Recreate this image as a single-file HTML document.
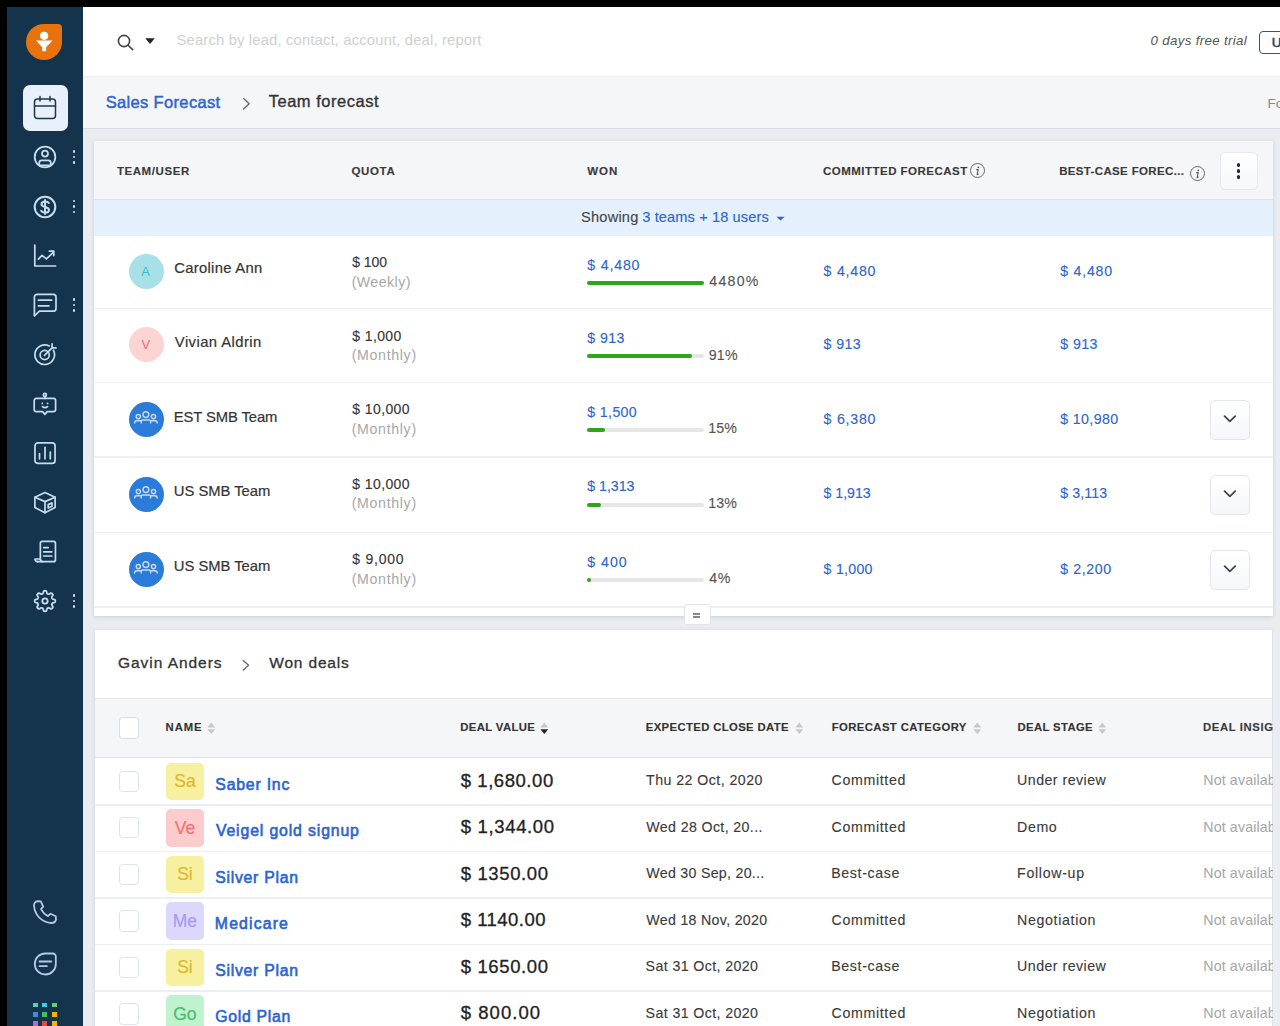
<!DOCTYPE html>
<html><head><meta charset="utf-8">
<style>
*{margin:0;padding:0;box-sizing:border-box}
html,body{width:1280px;height:1026px;overflow:hidden;background:#000;font-family:"Liberation Sans",sans-serif}
.a{position:absolute}
.t{position:absolute;white-space:nowrap;line-height:1;-webkit-text-stroke-width:.12px}
svg{overflow:visible}
</style></head><body>
<div class="a" style="left:82px;top:7px;width:1198px;height:1019px;background:#e9ecf0"></div>
<div class="a" style="left:7px;top:7px;width:75.5px;height:1019px;background:#14344e"></div>
<div class="a" style="left:26px;top:24px;width:36px;height:36px;background:#e8720c;border-radius:50% 4px 50% 50%"></div>
<svg class="a" style="left:26px;top:24px" width="36" height="36" viewBox="0 0 36 36"><circle cx="18.1" cy="11.8" r="4.1" fill="#fff"/><path d="M10 16.6H26.5L20.1 23.3V27.2H16.2V23.3Z" fill="#fff"/></svg>
<div class="a" style="left:22.6px;top:85px;width:45px;height:45.5px;background:#e8f1fb;border-radius:7px"></div>
<svg class="a" style="left:30px;top:92px" width="30" height="30" viewBox="0 0 30 30"><g fill="none" stroke="#1e3550" stroke-width="1.5" stroke-linecap="round" stroke-linejoin="round"><rect x="4.5" y="7" width="21" height="19.5" rx="3"/><path d="M4.5 14H25.5M10 4.5V9M20 4.5V9"/></g></svg>
<svg class="a" style="left:30px;top:142px" width="30" height="30" viewBox="0 0 30 30"><g fill="none" stroke="#c6dcf0" stroke-width="1.8" stroke-linecap="round" stroke-linejoin="round"><circle cx="15" cy="15" r="10.3"/><circle cx="15" cy="11.6" r="3"/><path d="M9.2 23.3V20.8A2.6 2.6 0 0 1 11.8 18.3H18.2A2.6 2.6 0 0 1 20.8 20.8V23.3Z"/></g></svg>
<svg class="a" style="left:30px;top:191.5px" width="30" height="30" viewBox="0 0 30 30"><g fill="none" stroke="#c6dcf0" stroke-width="2" stroke-linecap="round" stroke-linejoin="round"><circle cx="15" cy="15" r="10.3"/><path d="M18.8 11C18.2 10 17 9.5 15.2 9.5C12.9 9.5 11.5 10.5 11.5 12.2C11.5 15.9 19 14 19 17.9C19 19.6 17.4 20.6 15.1 20.6C13.2 20.6 11.8 19.9 11.1 18.8M15 8V22"/></g></svg>
<svg class="a" style="left:30px;top:240px" width="30" height="30" viewBox="0 0 30 30"><g fill="none" stroke="#c6dcf0" stroke-width="1.7" stroke-linecap="round" stroke-linejoin="round"><path d="M4.8 5.2V26H25.6"/><path d="M8.4 19.2L12 15.4L16.4 18.8L23.6 12.2M19.4 11.2H23.8V15.6"/></g></svg>
<svg class="a" style="left:30px;top:289px" width="30" height="30" viewBox="0 0 30 30"><g fill="none" stroke="#c6dcf0" stroke-width="1.7" stroke-linecap="round" stroke-linejoin="round"><path d="M7.1 5.4H23.3A2.7 2.7 0 0 1 26 8.1V19.5A2.7 2.7 0 0 1 23.3 22.2H9.4L4.4 27V8.1A2.7 2.7 0 0 1 7.1 5.4Z"/><path d="M8.4 11.2H21.6M8.4 16.8H19"/></g></svg>
<svg class="a" style="left:30px;top:340px" width="30" height="30" viewBox="0 0 30 30"><g fill="none" stroke="#c6dcf0" stroke-width="1.7" stroke-linecap="round" stroke-linejoin="round"><path d="M23.43 10.25A9.8 9.8 0 1 1 19.21 6"/><circle cx="14.7" cy="15" r="4.6"/><path d="M14.5 15.3L22.1 7.9M22.1 3.8V7.9H26"/></g></svg>
<svg class="a" style="left:30px;top:389px" width="30" height="30" viewBox="0 0 30 30"><g fill="none" stroke="#c6dcf0" stroke-width="1.7" stroke-linecap="round" stroke-linejoin="round"><circle cx="14.9" cy="5.9" r="1.55"/><path d="M14.9 7.5V9.4"/><path d="M6.4 9.4H23.4A2.2 2.2 0 0 1 25.6 11.6V20.4A2.2 2.2 0 0 1 23.4 22.6H17.2L14.9 25.4L12.6 22.6H6.4A2.2 2.2 0 0 1 4.2 20.4V11.6A2.2 2.2 0 0 1 6.4 9.4Z"/><path d="M12.3 14.3V14.4M17.6 14.3V14.4M12.5 17.6Q15 19.7 17.5 17.6"/></g></svg>
<svg class="a" style="left:30px;top:438px" width="30" height="30" viewBox="0 0 30 30"><g fill="none" stroke="#c6dcf0" stroke-width="1.7" stroke-linecap="round" stroke-linejoin="round"><rect x="4.95" y="4.95" width="20.1" height="20.5" rx="3"/><path d="M9.5 15.6V20.8M15 9.4V20.8M20.3 14V20.8"/></g></svg>
<svg class="a" style="left:30px;top:487px" width="30" height="30" viewBox="0 0 30 30"><g fill="none" stroke="#c6dcf0" stroke-width="1.7" stroke-linecap="round" stroke-linejoin="round"><path d="M15 5.5L25.1 10.2V20.6L15 25.7L4.9 20.6V10.2Z"/><path d="M4.9 10.2L15 14.6L25.1 10.2M15 14.6V25.7"/><path d="M18.2 17.6L22 15.9V19.3L18.2 21Z"/></g></svg>
<svg class="a" style="left:30px;top:536px" width="30" height="30" viewBox="0 0 30 30"><g fill="none" stroke="#c6dcf0" stroke-width="1.7" stroke-linecap="round" stroke-linejoin="round"><path d="M10.35 23V7.45A2 2 0 0 1 12.35 5.45H23.45A2 2 0 0 1 25.45 7.45V23.65A2 2 0 0 1 23.45 25.65H7.6"/><path d="M7.6 25.65A2.65 2.65 0 0 1 4.95 23H10.35Q10.35 25.65 12.6 25.65"/><path d="M13.6 11.6H18.2M13.6 15.8H21.8M13.6 20H21.8"/></g></svg>
<svg class="a" style="left:30px;top:586px" width="30" height="30" viewBox="0 0 30 30"><g fill="none" stroke="#c6dcf0" stroke-width="1.8" stroke-linecap="round" stroke-linejoin="round"><path d="M15.00 4.75 L15.40 4.77 L15.80 4.85 L16.18 5.05 L16.50 5.50 L16.74 6.27 L16.91 7.05 L17.11 7.51 L17.36 7.75 L17.62 7.90 L17.89 8.02 L18.17 8.13 L18.46 8.21 L18.80 8.21 L19.27 8.03 L19.94 7.60 L20.65 7.22 L21.20 7.13 L21.61 7.26 L21.95 7.48 L22.25 7.75 L22.52 8.05 L22.74 8.39 L22.87 8.80 L22.78 9.35 L22.40 10.06 L21.97 10.73 L21.79 11.20 L21.79 11.54 L21.87 11.83 L21.98 12.11 L22.10 12.38 L22.25 12.64 L22.49 12.89 L22.95 13.09 L23.73 13.26 L24.50 13.50 L24.95 13.82 L25.15 14.20 L25.23 14.60 L25.25 15.00 L25.23 15.40 L25.15 15.80 L24.95 16.18 L24.50 16.50 L23.73 16.74 L22.95 16.91 L22.49 17.11 L22.25 17.36 L22.10 17.62 L21.98 17.89 L21.87 18.17 L21.79 18.46 L21.79 18.80 L21.97 19.27 L22.40 19.94 L22.78 20.65 L22.87 21.20 L22.74 21.61 L22.52 21.95 L22.25 22.25 L21.95 22.52 L21.61 22.74 L21.20 22.87 L20.65 22.78 L19.94 22.40 L19.27 21.97 L18.80 21.79 L18.46 21.79 L18.17 21.87 L17.89 21.98 L17.62 22.10 L17.36 22.25 L17.11 22.49 L16.91 22.95 L16.74 23.73 L16.50 24.50 L16.18 24.95 L15.80 25.15 L15.40 25.23 L15.00 25.25 L14.60 25.23 L14.20 25.15 L13.82 24.95 L13.50 24.50 L13.26 23.73 L13.09 22.95 L12.89 22.49 L12.64 22.25 L12.38 22.10 L12.11 21.98 L11.83 21.87 L11.54 21.79 L11.20 21.79 L10.73 21.97 L10.06 22.40 L9.35 22.78 L8.80 22.87 L8.39 22.74 L8.05 22.52 L7.75 22.25 L7.48 21.95 L7.26 21.61 L7.13 21.20 L7.22 20.65 L7.60 19.94 L8.03 19.27 L8.21 18.80 L8.21 18.46 L8.13 18.17 L8.02 17.89 L7.90 17.62 L7.75 17.36 L7.51 17.11 L7.05 16.91 L6.27 16.74 L5.50 16.50 L5.05 16.18 L4.85 15.80 L4.77 15.40 L4.75 15.00 L4.77 14.60 L4.85 14.20 L5.05 13.82 L5.50 13.50 L6.27 13.26 L7.05 13.09 L7.51 12.89 L7.75 12.64 L7.90 12.38 L8.02 12.11 L8.13 11.83 L8.21 11.54 L8.21 11.20 L8.03 10.73 L7.60 10.06 L7.22 9.35 L7.13 8.80 L7.26 8.39 L7.48 8.05 L7.75 7.75 L8.05 7.48 L8.39 7.26 L8.80 7.13 L9.35 7.22 L10.06 7.60 L10.73 8.03 L11.20 8.21 L11.54 8.21 L11.83 8.13 L12.11 8.02 L12.38 7.90 L12.64 7.75 L12.89 7.51 L13.09 7.05 L13.26 6.27 L13.50 5.50 L13.82 5.05 L14.20 4.85 L14.60 4.77Z"/><circle cx="15" cy="15" r="2.7"/></g></svg>
<div class="a" style="left:72.7px;top:150.39999999999998px;width:2.6px;height:2.6px;background:#d0e4f4;border-radius:50%"></div>
<div class="a" style="left:72.7px;top:155.89999999999998px;width:2.6px;height:2.6px;background:#d0e4f4;border-radius:50%"></div>
<div class="a" style="left:72.7px;top:161.39999999999998px;width:2.6px;height:2.6px;background:#d0e4f4;border-radius:50%"></div>
<div class="a" style="left:72.7px;top:199.7px;width:2.6px;height:2.6px;background:#d0e4f4;border-radius:50%"></div>
<div class="a" style="left:72.7px;top:205.2px;width:2.6px;height:2.6px;background:#d0e4f4;border-radius:50%"></div>
<div class="a" style="left:72.7px;top:210.7px;width:2.6px;height:2.6px;background:#d0e4f4;border-radius:50%"></div>
<div class="a" style="left:72.7px;top:298.4px;width:2.6px;height:2.6px;background:#d0e4f4;border-radius:50%"></div>
<div class="a" style="left:72.7px;top:303.9px;width:2.6px;height:2.6px;background:#d0e4f4;border-radius:50%"></div>
<div class="a" style="left:72.7px;top:309.4px;width:2.6px;height:2.6px;background:#d0e4f4;border-radius:50%"></div>
<div class="a" style="left:72.7px;top:594.2px;width:2.6px;height:2.6px;background:#d0e4f4;border-radius:50%"></div>
<div class="a" style="left:72.7px;top:599.7px;width:2.6px;height:2.6px;background:#d0e4f4;border-radius:50%"></div>
<div class="a" style="left:72.7px;top:605.2px;width:2.6px;height:2.6px;background:#d0e4f4;border-radius:50%"></div>
<svg class="a" style="left:30px;top:897px" width="30" height="30" viewBox="0 0 30 30"><g fill="none" stroke="#afcbe8" stroke-width="1.8" stroke-linecap="round" stroke-linejoin="round"><path d="M7.8 4.2L10.8 4.4L13.2 9.7L11 12.1Q13.4 16.8 18 19.1L20.3 16.8L25.8 19.3L26 22.5Q25.3 26 21.5 26Q13.8 25.5 8.7 20Q4.5 15.3 4 8.5Q4.1 4.8 7.8 4.2Z"/></g></svg>
<svg class="a" style="left:30px;top:949px" width="30" height="30" viewBox="0 0 30 30"><g fill="none" stroke="#afcbe8" stroke-width="1.8" stroke-linecap="round" stroke-linejoin="round"><path d="M15 4.5H22.8A3 3 0 0 1 25.8 7.5V15.2A10.5 10.5 0 1 1 15 4.5Z"/><path d="M9.5 12.5H21.3M9.5 17.2H16.9"/></g></svg>
<div class="a" style="left:33.1px;top:1002.6px;width:4.9px;height:4.9px;background:#5ad0a4"></div>
<div class="a" style="left:42.38px;top:1002.6px;width:4.9px;height:4.9px;background:#3ccbe8"></div>
<div class="a" style="left:51.66px;top:1002.6px;width:4.9px;height:4.9px;background:#5fcf72"></div>
<div class="a" style="left:33.1px;top:1011.75px;width:4.9px;height:4.9px;background:#3a8fd8"></div>
<div class="a" style="left:42.38px;top:1011.75px;width:4.9px;height:4.9px;background:#3fbf60"></div>
<div class="a" style="left:51.66px;top:1011.75px;width:4.9px;height:4.9px;background:#f6b400"></div>
<div class="a" style="left:33.1px;top:1020.9px;width:4.9px;height:4.9px;background:#b06fd0"></div>
<div class="a" style="left:42.38px;top:1020.9px;width:4.9px;height:4.9px;background:#e84a3a"></div>
<div class="a" style="left:51.66px;top:1020.9px;width:4.9px;height:4.9px;background:#f6b400"></div>
<div class="a" style="left:82.5px;top:7px;width:1197.5px;height:69px;background:#fff"></div>
<svg class="a" style="left:112px;top:30px" width="26" height="24" viewBox="0 0 26 24"><g fill="none" stroke="#444" stroke-width="1.6" stroke-linecap="round"><circle cx="12" cy="11" r="5.6"/><path d="M16.2 15.2L20.6 19.6"/></g></svg>
<svg class="a" style="left:144px;top:37px" width="12" height="8" viewBox="0 0 12 8"><path d="M1.2 1.2H10.8L6 7Z" fill="#222"/></svg>
<div class="t" style="left:176.56px;top:33.27px;font-size:14.8px;color:#cfcfcf;letter-spacing:0.158px;-webkit-text-stroke-width:0">Search by lead, contact, account, deal, report</div>
<div class="t" style="left:1150.47px;top:33.74px;font-size:13.3px;color:#555;font-style:italic;letter-spacing:0.339px;-webkit-text-stroke-width:0">0 days free trial</div>
<div class="a" style="left:1258.5px;top:30.5px;width:40px;height:23.5px;border:1.7px solid #34557a;border-radius:4px;background:#fff"></div>
<div class="t" style="left:1271.8px;top:35.57px;font-size:13.5px;color:#1e3a5c;-webkit-text-stroke-width:.5px">U</div>
<div class="a" style="left:82.5px;top:75.5px;width:1197.5px;height:53.5px;background:#f5f6f8;border-top:1.2px solid #eceff3;border-bottom:1.5px solid #d9dfe6"></div>
<div class="t" style="left:105.78px;top:94.03px;font-size:16.5px;color:#2c64d0;letter-spacing:0.333px;-webkit-text-stroke-width:.45px">Sales Forecast</div>
<svg class="a" style="left:240px;top:96px" width="14" height="16" viewBox="0 0 14 16"><g fill="none" stroke="#666" stroke-width="1.3" stroke-linecap="round" stroke-linejoin="round"><path d="M3.6 2.6L9.2 7.8L3.6 13"/></g></svg>
<div class="t" style="left:268.67px;top:93.03px;font-size:16.5px;color:#333;letter-spacing:0.523px;-webkit-text-stroke-width:.35px">Team forecast</div>
<div class="t" style="left:1267.5px;top:97.37px;font-size:13.5px;color:#8a8a8a;-webkit-text-stroke-width:0">Fo</div>
<div class="a" style="left:94px;top:141px;width:1179px;height:474.5px;background:#fff;box-shadow:0 1px 4px rgba(40,60,90,.16)"></div>
<div class="a" style="left:94px;top:141px;width:1179px;height:59px;background:#f5f6f8;border-bottom:1.5px solid #dde2e8"></div>
<div class="t" style="left:116.88px;top:166.07px;font-size:11.5px;color:#3a3a3a;font-weight:bold;letter-spacing:0.576px;">TEAM/USER</div>
<div class="t" style="left:351.54px;top:166.07px;font-size:11.5px;color:#3a3a3a;font-weight:bold;letter-spacing:0.624px;">QUOTA</div>
<div class="t" style="left:587.2px;top:166.07px;font-size:11.5px;color:#3a3a3a;font-weight:bold;letter-spacing:1.065px;">WON</div>
<div class="t" style="left:822.94px;top:165.57px;font-size:11.5px;color:#3a3a3a;font-weight:bold;letter-spacing:0.484px;">COMMITTED FORECAST</div>
<div class="t" style="left:1059.2px;top:166.27px;font-size:11.5px;color:#3a3a3a;font-weight:bold;letter-spacing:0.347px;">BEST-CASE FOREC...</div>
<div class="a" style="left:970.4px;top:163px;width:15px;height:15px;border:1.1px solid #666;border-radius:50%"></div>
<svg class="a" style="left:970.4px;top:163px" width="15" height="15" viewBox="0 0 15 15"><circle cx="8.3" cy="4.3" r=".85" fill="#555"/><path d="M6.6 6.6H8.3L7.1 11.3Q7 11.8 7.5 11.6L8.4 11.1" fill="none" stroke="#555" stroke-width="1.05" stroke-linecap="round" stroke-linejoin="round"/></svg>
<div class="a" style="left:1190px;top:165.7px;width:15px;height:15px;border:1.1px solid #666;border-radius:50%"></div>
<svg class="a" style="left:1190px;top:165.7px" width="15" height="15" viewBox="0 0 15 15"><circle cx="8.3" cy="4.3" r=".85" fill="#555"/><path d="M6.6 6.6H8.3L7.1 11.3Q7 11.8 7.5 11.6L8.4 11.1" fill="none" stroke="#555" stroke-width="1.05" stroke-linecap="round" stroke-linejoin="round"/></svg>
<div class="a" style="left:1219.5px;top:151.5px;width:38.5px;height:38px;border:1px solid #e6e8eb;border-radius:5px;background:linear-gradient(#fff,#f7f8fa)"></div>
<div class="a" style="left:1236.9px;top:163.0px;width:3.6px;height:3.6px;background:#222;border-radius:50%"></div>
<div class="a" style="left:1236.9px;top:169.0px;width:3.6px;height:3.6px;background:#222;border-radius:50%"></div>
<div class="a" style="left:1236.9px;top:175.0px;width:3.6px;height:3.6px;background:#222;border-radius:50%"></div>
<div class="a" style="left:94px;top:200px;width:1179px;height:35.5px;background:#e4f0fc"></div>
<div class="t" style="left:580.97px;top:210.04px;font-size:14.6px;color:#444;letter-spacing:0.231px;">Showing</div>
<div class="t" style="left:642.22px;top:210.04px;font-size:14.6px;color:#2c64d0;letter-spacing:0.119px;">3 teams + 18 users</div>
<svg class="a" style="left:775px;top:214.5px" width="11" height="7" viewBox="0 0 11 7"><path d="M1.5 1.8H9.5L5.5 5.6Z" fill="#2c64d0"/></svg>
<div class="a" style="left:94px;top:307.8px;width:1179px;height:1.6px;background:#eef0f3"></div>
<div class="a" style="left:128.75px;top:253.75px;width:35px;height:35px;background:#a8e0e8;border-radius:50%"></div>
<div class="t" style="left:141.25px;top:264.75px;font-size:13px;color:#3fb8c8;letter-spacing:0.000px;-webkit-text-stroke-width:0">A</div>
<div class="t" style="left:174.26px;top:261.27px;font-size:14.8px;color:#333;letter-spacing:0.293px;-webkit-text-stroke-width:.2px">Caroline Ann</div>
<div class="t" style="left:352.36px;top:255.45px;font-size:14px;color:#333;letter-spacing:-0.110px;">$ 100</div>
<div class="t" style="left:351.65px;top:274.68px;font-size:14.2px;color:#a8a8a8;letter-spacing:0.434px;-webkit-text-stroke-width:0">(Weekly)</div>
<div class="t" style="left:587.36px;top:257.68px;font-size:14.2px;color:#2c64d0;letter-spacing:0.797px;">$ 4,480</div>
<div class="a" style="left:587px;top:281.20px;width:116.5px;height:4.2px;border-radius:2.1px;background:#e6e6e6"><div style="width:116.5px;height:4.2px;border-radius:2.1px;background:#2aa81a"></div></div>
<div class="t" style="left:709.22px;top:274.48px;font-size:14.2px;color:#555;letter-spacing:1.273px;">4480%</div>
<div class="t" style="left:823.61px;top:264.38px;font-size:14.2px;color:#2c64d0;letter-spacing:0.755px;">$ 4,480</div>
<div class="t" style="left:1060.26px;top:264.38px;font-size:14.2px;color:#2c64d0;letter-spacing:0.755px;">$ 4,480</div>
<div class="a" style="left:94px;top:381.59999999999997px;width:1179px;height:1.6px;background:#eef0f3"></div>
<div class="a" style="left:128.75px;top:327.2px;width:35px;height:35px;background:#fcd4d4;border-radius:50%"></div>
<div class="t" style="left:141.57px;top:338.20px;font-size:13px;color:#ee6e6e;letter-spacing:0.000px;-webkit-text-stroke-width:0">V</div>
<div class="t" style="left:174.85px;top:335.17px;font-size:14.8px;color:#333;letter-spacing:0.436px;-webkit-text-stroke-width:.2px">Vivian Aldrin</div>
<div class="t" style="left:352.36px;top:328.55px;font-size:14px;color:#333;letter-spacing:0.357px;">$ 1,000</div>
<div class="t" style="left:351.65px;top:347.78px;font-size:14.2px;color:#a8a8a8;letter-spacing:0.667px;-webkit-text-stroke-width:0">(Monthly)</div>
<div class="t" style="left:587.36px;top:330.78px;font-size:14.2px;color:#2c64d0;letter-spacing:0.365px;">$ 913</div>
<div class="a" style="left:587px;top:354.30px;width:116.5px;height:4.2px;border-radius:2.1px;background:#e6e6e6"><div style="width:105.4px;height:4.2px;border-radius:2.1px;background:#2aa81a"></div></div>
<div class="t" style="left:708.79px;top:347.58px;font-size:14.2px;color:#555;letter-spacing:0.189px;">91%</div>
<div class="t" style="left:823.61px;top:337.48px;font-size:14.2px;color:#2c64d0;letter-spacing:0.365px;">$ 913</div>
<div class="t" style="left:1060.26px;top:337.48px;font-size:14.2px;color:#2c64d0;letter-spacing:0.428px;">$ 913</div>
<div class="a" style="left:94px;top:456.4px;width:1179px;height:1.6px;background:#eef0f3"></div>
<div class="a" style="left:128.75px;top:402.2px;width:35px;height:35px;background:#2b7bd9;border-radius:50%"></div>
<svg class="a" style="left:128.75px;top:402.2px" width="35" height="35" viewBox="0 0 35 35"><g fill="none" stroke="#c8dcf6" stroke-width="1.4" stroke-linecap="round"><circle cx="16.9" cy="12.6" r="2.9"/><circle cx="9.3" cy="14.6" r="2.1"/><circle cx="24.5" cy="14.6" r="2.1"/><path d="M12.2 21V19.6Q12.2 18 13.8 18H20Q21.6 18 21.6 19.6V21"/><path d="M5.6 21Q5.6 18.8 7.8 18.8H11.6M28.2 21Q28.2 18.8 26 18.8H22.2"/></g></svg>
<div class="t" style="left:173.82px;top:410.07px;font-size:14.8px;color:#333;letter-spacing:-0.106px;-webkit-text-stroke-width:.2px">EST SMB Team</div>
<div class="t" style="left:352.36px;top:402.35px;font-size:14px;color:#333;letter-spacing:0.386px;">$ 10,000</div>
<div class="t" style="left:351.65px;top:421.58px;font-size:14.2px;color:#a8a8a8;letter-spacing:0.667px;-webkit-text-stroke-width:0">(Monthly)</div>
<div class="t" style="left:587.36px;top:404.58px;font-size:14.2px;color:#2c64d0;letter-spacing:0.339px;">$ 1,500</div>
<div class="a" style="left:587px;top:428.10px;width:116.5px;height:4.2px;border-radius:2.1px;background:#e6e6e6"><div style="width:17.5px;height:4.2px;border-radius:2.1px;background:#2aa81a"></div></div>
<div class="t" style="left:708.36px;top:421.38px;font-size:14.2px;color:#555;letter-spacing:0.027px;">15%</div>
<div class="t" style="left:823.61px;top:411.68px;font-size:14.2px;color:#2c64d0;letter-spacing:0.755px;">$ 6,380</div>
<div class="t" style="left:1060.26px;top:411.68px;font-size:14.2px;color:#2c64d0;letter-spacing:0.376px;">$ 10,980</div>
<div class="a" style="left:1210px;top:400.0px;width:39.7px;height:40px;border:1px solid #e4e6e9;border-radius:5px;background:linear-gradient(#fff,#f6f7f9)"></div>
<svg class="a" style="left:1220px;top:410.4px" width="20" height="16" viewBox="0 0 20 16"><g fill="none" stroke="#444" stroke-width="1.8" stroke-linecap="round" stroke-linejoin="round"><path d="M4.6 6.1L9.9 11.3L15.2 6.1"/></g></svg>
<div class="a" style="left:94px;top:531.6px;width:1179px;height:1.6px;background:#eef0f3"></div>
<div class="a" style="left:128.75px;top:477.0px;width:35px;height:35px;background:#2b7bd9;border-radius:50%"></div>
<svg class="a" style="left:128.75px;top:477.0px" width="35" height="35" viewBox="0 0 35 35"><g fill="none" stroke="#c8dcf6" stroke-width="1.4" stroke-linecap="round"><circle cx="16.9" cy="12.6" r="2.9"/><circle cx="9.3" cy="14.6" r="2.1"/><circle cx="24.5" cy="14.6" r="2.1"/><path d="M12.2 21V19.6Q12.2 18 13.8 18H20Q21.6 18 21.6 19.6V21"/><path d="M5.6 21Q5.6 18.8 7.8 18.8H11.6M28.2 21Q28.2 18.8 26 18.8H22.2"/></g></svg>
<div class="t" style="left:173.82px;top:484.27px;font-size:14.8px;color:#333;letter-spacing:-0.032px;-webkit-text-stroke-width:.2px">US SMB Team</div>
<div class="t" style="left:352.36px;top:477.15px;font-size:14px;color:#333;letter-spacing:0.386px;">$ 10,000</div>
<div class="t" style="left:351.65px;top:496.38px;font-size:14.2px;color:#a8a8a8;letter-spacing:0.667px;-webkit-text-stroke-width:0">(Monthly)</div>
<div class="t" style="left:587.36px;top:479.38px;font-size:14.2px;color:#2c64d0;letter-spacing:-0.054px;">$ 1,313</div>
<div class="a" style="left:587px;top:502.90px;width:116.5px;height:4.2px;border-radius:2.1px;background:#e6e6e6"><div style="width:14.0px;height:4.2px;border-radius:2.1px;background:#2aa81a"></div></div>
<div class="t" style="left:708.36px;top:496.18px;font-size:14.2px;color:#555;letter-spacing:0.027px;">13%</div>
<div class="t" style="left:823.61px;top:486.48px;font-size:14.2px;color:#2c64d0;letter-spacing:-0.054px;">$ 1,913</div>
<div class="t" style="left:1060.26px;top:486.48px;font-size:14.2px;color:#2c64d0;letter-spacing:0.086px;">$ 3,113</div>
<div class="a" style="left:1210px;top:474.8px;width:39.7px;height:40px;border:1px solid #e4e6e9;border-radius:5px;background:linear-gradient(#fff,#f6f7f9)"></div>
<svg class="a" style="left:1220px;top:485.2px" width="20" height="16" viewBox="0 0 20 16"><g fill="none" stroke="#444" stroke-width="1.8" stroke-linecap="round" stroke-linejoin="round"><path d="M4.6 6.1L9.9 11.3L15.2 6.1"/></g></svg>
<div class="a" style="left:94px;top:606.1px;width:1179px;height:1.6px;background:#eef0f3"></div>
<div class="a" style="left:128.75px;top:551.8px;width:35px;height:35px;background:#2b7bd9;border-radius:50%"></div>
<svg class="a" style="left:128.75px;top:551.8px" width="35" height="35" viewBox="0 0 35 35"><g fill="none" stroke="#c8dcf6" stroke-width="1.4" stroke-linecap="round"><circle cx="16.9" cy="12.6" r="2.9"/><circle cx="9.3" cy="14.6" r="2.1"/><circle cx="24.5" cy="14.6" r="2.1"/><path d="M12.2 21V19.6Q12.2 18 13.8 18H20Q21.6 18 21.6 19.6V21"/><path d="M5.6 21Q5.6 18.8 7.8 18.8H11.6M28.2 21Q28.2 18.8 26 18.8H22.2"/></g></svg>
<div class="t" style="left:173.82px;top:558.77px;font-size:14.8px;color:#333;letter-spacing:-0.032px;-webkit-text-stroke-width:.2px">US SMB Team</div>
<div class="t" style="left:352.36px;top:552.35px;font-size:14px;color:#333;letter-spacing:0.740px;">$ 9,000</div>
<div class="t" style="left:351.65px;top:571.58px;font-size:14.2px;color:#a8a8a8;letter-spacing:0.667px;-webkit-text-stroke-width:0">(Monthly)</div>
<div class="t" style="left:587.36px;top:554.58px;font-size:14.2px;color:#2c64d0;letter-spacing:0.954px;">$ 400</div>
<div class="a" style="left:587px;top:578.10px;width:116.5px;height:4.2px;border-radius:2.1px;background:#e6e6e6"><div style="width:4.2px;height:4.2px;border-radius:2.1px;background:#2aa81a"></div></div>
<div class="t" style="left:709.22px;top:571.38px;font-size:14.2px;color:#555;letter-spacing:0.762px;">4%</div>
<div class="t" style="left:823.61px;top:561.68px;font-size:14.2px;color:#2c64d0;letter-spacing:0.255px;">$ 1,000</div>
<div class="t" style="left:1060.26px;top:561.68px;font-size:14.2px;color:#2c64d0;letter-spacing:0.580px;">$ 2,200</div>
<div class="a" style="left:1210px;top:550.0px;width:39.7px;height:40px;border:1px solid #e4e6e9;border-radius:5px;background:linear-gradient(#fff,#f6f7f9)"></div>
<svg class="a" style="left:1220px;top:560.4px" width="20" height="16" viewBox="0 0 20 16"><g fill="none" stroke="#444" stroke-width="1.8" stroke-linecap="round" stroke-linejoin="round"><path d="M4.6 6.1L9.9 11.3L15.2 6.1"/></g></svg>
<div class="a" style="left:683.5px;top:604.4px;width:27px;height:21px;background:#fff;border:1px solid #e2e4e8;border-radius:3px"></div>
<div class="a" style="left:693.4px;top:613px;width:6.6px;height:1.8px;background:#888"></div>
<div class="a" style="left:693.4px;top:616.1px;width:6.6px;height:1.8px;background:#888"></div>
<div class="a" style="left:95px;top:630px;width:1177px;height:400px;background:#fff;box-shadow:0 1px 4px rgba(40,60,90,.14)"></div>
<div class="t" style="left:118.02px;top:655.28px;font-size:15.5px;color:#333;letter-spacing:0.954px;-webkit-text-stroke-width:.3px">Gavin Anders</div>
<svg class="a" style="left:239px;top:657px" width="14" height="16" viewBox="0 0 14 16"><g fill="none" stroke="#666" stroke-width="1.3" stroke-linecap="round" stroke-linejoin="round"><path d="M4.2 3.4L9.6 8.2L4.2 13"/></g></svg>
<div class="t" style="left:269.2px;top:655.28px;font-size:15.5px;color:#333;letter-spacing:0.839px;-webkit-text-stroke-width:.3px">Won deals</div>
<div class="a" style="left:95px;top:698px;width:1177px;height:60px;background:#f5f6f8;border-top:1.5px solid #e6e9ee;border-bottom:1.5px solid #dde2e8"></div>
<div class="a" style="left:118.6px;top:717.2px;width:20.4px;height:21.5px;border:1.5px solid #d5dce5;border-radius:3.5px;background:#fff"></div>
<div class="t" style="left:165.61px;top:722.43px;font-size:11.3px;color:#333;font-weight:bold;letter-spacing:0.869px;">NAME</div>
<svg class="a" style="left:206.6px;top:721.5px" width="9" height="13" viewBox="0 0 9 13"><path d="M0.4 5.4L4.3 0.6L8.2 5.4Z" fill="#c8c8c8"/><path d="M0.4 7.2L4.3 12L8.2 7.2Z" fill="#c8c8c8"/></svg>
<div class="t" style="left:460.21px;top:722.43px;font-size:11.3px;color:#333;font-weight:bold;letter-spacing:0.384px;">DEAL VALUE</div>
<svg class="a" style="left:540px;top:721.5px" width="9" height="13" viewBox="0 0 9 13"><path d="M0.4 5.4L4.3 0.6L8.2 5.4Z" fill="#c8c8c8"/><path d="M0.4 7.2L4.3 12L8.2 7.2Z" fill="#222"/></svg>
<div class="t" style="left:645.81px;top:722.43px;font-size:11.3px;color:#333;font-weight:bold;letter-spacing:0.377px;">EXPECTED CLOSE DATE</div>
<svg class="a" style="left:794.6px;top:721.5px" width="9" height="13" viewBox="0 0 9 13"><path d="M0.4 5.4L4.3 0.6L8.2 5.4Z" fill="#c8c8c8"/><path d="M0.4 7.2L4.3 12L8.2 7.2Z" fill="#c8c8c8"/></svg>
<div class="t" style="left:831.81px;top:722.43px;font-size:11.3px;color:#333;font-weight:bold;letter-spacing:0.405px;">FORECAST CATEGORY</div>
<svg class="a" style="left:972.7px;top:721.5px" width="9" height="13" viewBox="0 0 9 13"><path d="M0.4 5.4L4.3 0.6L8.2 5.4Z" fill="#c8c8c8"/><path d="M0.4 7.2L4.3 12L8.2 7.2Z" fill="#c8c8c8"/></svg>
<div class="t" style="left:1017.51px;top:722.43px;font-size:11.3px;color:#333;font-weight:bold;letter-spacing:0.375px;">DEAL STAGE</div>
<svg class="a" style="left:1097.8px;top:721.5px" width="9" height="13" viewBox="0 0 9 13"><path d="M0.4 5.4L4.3 0.6L8.2 5.4Z" fill="#c8c8c8"/><path d="M0.4 7.2L4.3 12L8.2 7.2Z" fill="#c8c8c8"/></svg>
<div class="t" style="left:1203.01px;top:722.43px;font-size:11.3px;color:#3a3a3a;font-weight:bold;letter-spacing:0.627px;">DEAL INSIGHTS</div>
<div class="a" style="left:95px;top:804.0px;width:1177px;height:1.5px;background:#eceef2"></div>
<div class="a" style="left:118.6px;top:770.7px;width:20.4px;height:21.2px;border:1.5px solid #dde3ea;border-radius:3.5px;background:#fff"></div>
<div class="a" style="left:166.1px;top:762.5px;width:37.7px;height:37.5px;background:#f6f0a0;border-radius:5px"></div>
<div class="t" style="left:166.1px;width:37.7px;text-align:center;top:773.19px;font-size:17.5px;color:#deb92a;-webkit-text-stroke-width:.2px">Sa</div>
<div class="t" style="left:215.31px;top:776.53px;font-size:15.8px;color:#2c64d0;letter-spacing:0.805px;-webkit-text-stroke-width:.6px">Saber Inc</div>
<div class="t" style="left:460.82px;top:771.64px;font-size:18.5px;color:#222;letter-spacing:0.547px;-webkit-text-stroke-width:.3px">$ 1,680.00</div>
<div class="t" style="left:646.02px;top:773.28px;font-size:14.2px;color:#3a3a3a;letter-spacing:0.452px;">Thu 22 Oct, 2020</div>
<div class="t" style="left:831.59px;top:773.28px;font-size:14.2px;color:#3a3a3a;letter-spacing:0.647px;">Committed</div>
<div class="t" style="left:1017.06px;top:773.28px;font-size:14.2px;color:#3a3a3a;letter-spacing:0.473px;">Under review</div>
<div class="t" style="left:1203.26px;top:773.28px;font-size:14.2px;color:#a6a6a6;letter-spacing:0.150px;-webkit-text-stroke-width:0">Not available</div>
<div class="a" style="left:95px;top:850.55px;width:1177px;height:1.5px;background:#eceef2"></div>
<div class="a" style="left:118.6px;top:817.25px;width:20.4px;height:21.2px;border:1.5px solid #dde3ea;border-radius:3.5px;background:#fff"></div>
<div class="a" style="left:166.1px;top:809.05px;width:37.7px;height:37.5px;background:#fccccc;border-radius:5px"></div>
<div class="t" style="left:166.1px;width:37.7px;text-align:center;top:819.74px;font-size:17.5px;color:#f07272;-webkit-text-stroke-width:.2px">Ve</div>
<div class="t" style="left:215.94px;top:823.08px;font-size:15.8px;color:#2c64d0;letter-spacing:0.864px;-webkit-text-stroke-width:.6px">Veigel gold signup</div>
<div class="t" style="left:460.82px;top:818.19px;font-size:18.5px;color:#222;letter-spacing:0.647px;-webkit-text-stroke-width:.3px">$ 1,344.00</div>
<div class="t" style="left:646.3px;top:819.83px;font-size:14.2px;color:#3a3a3a;letter-spacing:0.374px;">Wed 28 Oct, 20...</div>
<div class="t" style="left:831.59px;top:819.83px;font-size:14.2px;color:#3a3a3a;letter-spacing:0.647px;">Committed</div>
<div class="t" style="left:1017.06px;top:819.83px;font-size:14.2px;color:#3a3a3a;letter-spacing:0.597px;">Demo</div>
<div class="t" style="left:1203.26px;top:819.83px;font-size:14.2px;color:#a6a6a6;letter-spacing:0.150px;-webkit-text-stroke-width:0">Not available</div>
<div class="a" style="left:95px;top:897.1px;width:1177px;height:1.5px;background:#eceef2"></div>
<div class="a" style="left:118.6px;top:863.8000000000001px;width:20.4px;height:21.2px;border:1.5px solid #dde3ea;border-radius:3.5px;background:#fff"></div>
<div class="a" style="left:166.1px;top:855.6px;width:37.7px;height:37.5px;background:#f6f0a0;border-radius:5px"></div>
<div class="t" style="left:166.1px;width:37.7px;text-align:center;top:866.29px;font-size:17.5px;color:#deb92a;-webkit-text-stroke-width:.2px">Si</div>
<div class="t" style="left:215.31px;top:869.63px;font-size:15.8px;color:#2c64d0;letter-spacing:0.717px;-webkit-text-stroke-width:.6px">Silver Plan</div>
<div class="t" style="left:460.82px;top:864.74px;font-size:18.5px;color:#222;letter-spacing:0.612px;-webkit-text-stroke-width:.3px">$ 1350.00</div>
<div class="t" style="left:646.3px;top:866.38px;font-size:14.2px;color:#3a3a3a;letter-spacing:0.289px;">Wed 30 Sep, 20...</div>
<div class="t" style="left:831.16px;top:866.38px;font-size:14.2px;color:#3a3a3a;letter-spacing:0.657px;">Best-case</div>
<div class="t" style="left:1017.06px;top:866.38px;font-size:14.2px;color:#3a3a3a;letter-spacing:0.685px;">Follow-up</div>
<div class="t" style="left:1203.26px;top:866.38px;font-size:14.2px;color:#a6a6a6;letter-spacing:0.150px;-webkit-text-stroke-width:0">Not available</div>
<div class="a" style="left:95px;top:943.65px;width:1177px;height:1.5px;background:#eceef2"></div>
<div class="a" style="left:118.6px;top:910.35px;width:20.4px;height:21.2px;border:1.5px solid #dde3ea;border-radius:3.5px;background:#fff"></div>
<div class="a" style="left:166.1px;top:902.15px;width:37.7px;height:37.5px;background:#dcd8fc;border-radius:5px"></div>
<div class="t" style="left:166.1px;width:37.7px;text-align:center;top:912.84px;font-size:17.5px;color:#a99af2;-webkit-text-stroke-width:.2px">Me</div>
<div class="t" style="left:214.84px;top:916.18px;font-size:15.8px;color:#2c64d0;letter-spacing:1.151px;-webkit-text-stroke-width:.6px">Medicare</div>
<div class="t" style="left:460.82px;top:911.29px;font-size:18.5px;color:#222;letter-spacing:0.474px;-webkit-text-stroke-width:.3px">$ 1140.00</div>
<div class="t" style="left:646.3px;top:912.93px;font-size:14.2px;color:#3a3a3a;letter-spacing:0.311px;">Wed 18 Nov, 2020</div>
<div class="t" style="left:831.59px;top:912.93px;font-size:14.2px;color:#3a3a3a;letter-spacing:0.647px;">Committed</div>
<div class="t" style="left:1017.06px;top:912.93px;font-size:14.2px;color:#3a3a3a;letter-spacing:0.658px;">Negotiation</div>
<div class="t" style="left:1203.26px;top:912.93px;font-size:14.2px;color:#a6a6a6;letter-spacing:0.150px;-webkit-text-stroke-width:0">Not available</div>
<div class="a" style="left:95px;top:990.2px;width:1177px;height:1.5px;background:#eceef2"></div>
<div class="a" style="left:118.6px;top:956.9000000000001px;width:20.4px;height:21.2px;border:1.5px solid #dde3ea;border-radius:3.5px;background:#fff"></div>
<div class="a" style="left:166.1px;top:948.7px;width:37.7px;height:37.5px;background:#f6f0a0;border-radius:5px"></div>
<div class="t" style="left:166.1px;width:37.7px;text-align:center;top:959.39px;font-size:17.5px;color:#deb92a;-webkit-text-stroke-width:.2px">Si</div>
<div class="t" style="left:215.31px;top:962.73px;font-size:15.8px;color:#2c64d0;letter-spacing:0.717px;-webkit-text-stroke-width:.6px">Silver Plan</div>
<div class="t" style="left:460.82px;top:957.84px;font-size:18.5px;color:#222;letter-spacing:0.612px;-webkit-text-stroke-width:.3px">$ 1650.00</div>
<div class="t" style="left:645.59px;top:959.48px;font-size:14.2px;color:#3a3a3a;letter-spacing:0.396px;">Sat 31 Oct, 2020</div>
<div class="t" style="left:831.16px;top:959.48px;font-size:14.2px;color:#3a3a3a;letter-spacing:0.657px;">Best-case</div>
<div class="t" style="left:1017.06px;top:959.48px;font-size:14.2px;color:#3a3a3a;letter-spacing:0.473px;">Under review</div>
<div class="t" style="left:1203.26px;top:959.48px;font-size:14.2px;color:#a6a6a6;letter-spacing:0.150px;-webkit-text-stroke-width:0">Not available</div>
<div class="a" style="left:118.6px;top:1003.45px;width:20.4px;height:21.2px;border:1.5px solid #dde3ea;border-radius:3.5px;background:#fff"></div>
<div class="a" style="left:166.1px;top:995.25px;width:37.7px;height:37.5px;background:#bff2cf;border-radius:5px"></div>
<div class="t" style="left:166.1px;width:37.7px;text-align:center;top:1005.94px;font-size:17.5px;color:#4cbd6a;-webkit-text-stroke-width:.2px">Go</div>
<div class="t" style="left:215.31px;top:1009.28px;font-size:15.8px;color:#2c64d0;letter-spacing:0.709px;-webkit-text-stroke-width:.6px">Gold Plan</div>
<div class="t" style="left:460.82px;top:1004.39px;font-size:18.5px;color:#222;letter-spacing:1.025px;-webkit-text-stroke-width:.3px">$ 800.00</div>
<div class="t" style="left:645.59px;top:1006.03px;font-size:14.2px;color:#3a3a3a;letter-spacing:0.396px;">Sat 31 Oct, 2020</div>
<div class="t" style="left:831.59px;top:1006.03px;font-size:14.2px;color:#3a3a3a;letter-spacing:0.647px;">Committed</div>
<div class="t" style="left:1017.06px;top:1006.03px;font-size:14.2px;color:#3a3a3a;letter-spacing:0.658px;">Negotiation</div>
<div class="t" style="left:1203.26px;top:1006.03px;font-size:14.2px;color:#a6a6a6;letter-spacing:0.150px;-webkit-text-stroke-width:0">Not available</div>
<div class="a" style="left:1272.8px;top:630px;width:7.2px;height:396px;background:#e9ecf0"></div>
</body></html>
